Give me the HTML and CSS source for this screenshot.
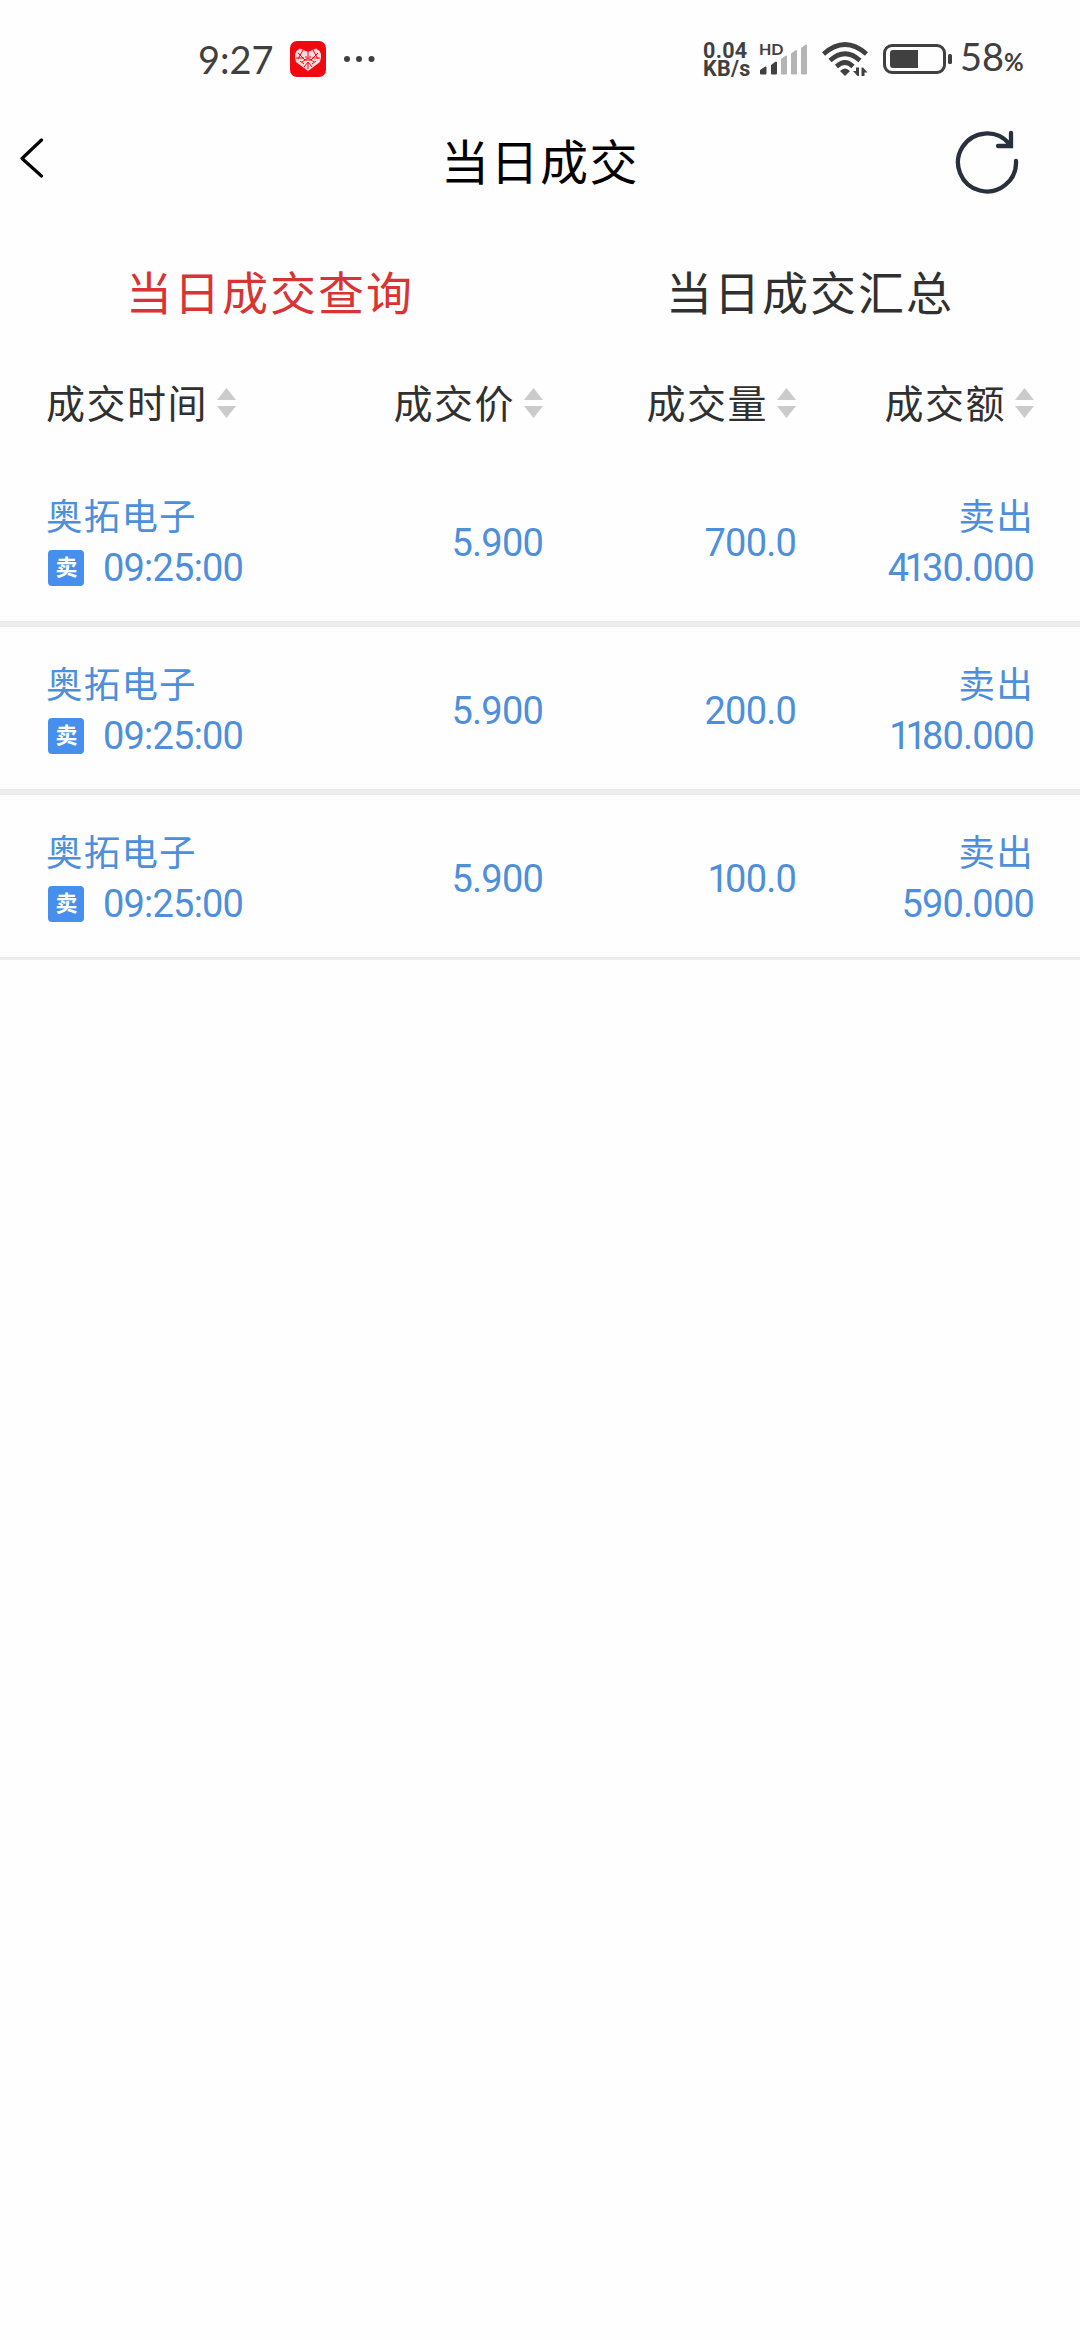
FILE: index.html
```html
<!DOCTYPE html>
<html lang="zh-CN">
<head>
<meta charset="utf-8">
<title>当日成交</title>
<link rel="stylesheet" href="styles.css">
</head>
<body>
<div class="status">
  <span class="clock">9:27</span>
  <svg class="app" viewBox="0 0 36 36"><rect width="36" height="36" rx="7" fill="#ee0a10"/><path d="M18 30 6 21Q2.500 11 10 7.500L18 11 26 7.500Q33.500 11 30 21Z" fill="#fbdcdc"/><path d="M8 12l7 7M13 9l-5 9M28 12l-7 7M23 9l5 9M6 17h8M22 17h8M12 21l6-4 6 4M14 26l4-5 4 5M18 11v4M15 16l6 0M15 19h6M18 22v6M10 20l4 3M26 20l-4 3" stroke="#ee0a10" stroke-width="1" fill="none"/></svg>
  <svg class="dots" viewBox="0 0 32 8"><circle cx="4" cy="4" r="3"/><circle cx="16" cy="4" r="3"/><circle cx="28.500" cy="4" r="3"/></svg>
  <div class="speed"><span>0.04</span><span>KB/s</span></div>
  <div class="signal"><span class="hd">HD</span>
    <svg viewBox="0 0 50 34"><path d="M2 31.500v-3l4.500-3v6z M13 31.500v-8l4-3v11z" fill="#404040" stroke="#404040" stroke-width="2" stroke-linejoin="round"/><path d="M23 31.500v-14l4-3v17z M33 31.500V12l4-3v22.500z M43 31.500V6.500l4-3v28z" fill="#b4b4b4" stroke="#b4b4b4" stroke-width="2" stroke-linejoin="round"/></svg>
  </div>
  <svg class="wifi" viewBox="0 0 46 34"><g fill="none" stroke="#404040" stroke-width="4.600"><path d="M1.500 12Q23-7 44.500 12"/><path d="M8 18.500Q23 5 38 18.500"/><path d="M14.500 24.500Q23 16.500 31 24.500"/></g><path d="M18 29q5-5 10 0l-5 5z"/><path d="M37 25.500V34h-1.500L31 29h3v-3.500zM39.500 34v-8.500H41l4.500 5h-3V34z"/></svg>
  <svg class="battery" viewBox="0 0 70 30"><rect x="1.500" y="1.500" width="60" height="27" rx="7.500" fill="none" stroke="#404040" stroke-width="3"/><path d="M10 6h25v18H10q-3 0-3-3V9q0-3 3-3z"/><rect x="65" y="10" width="4" height="10" rx="1.500"/></svg>
  <span class="level">58<small>%</small></span>
</div>
<header class="nav">
  <svg class="back" viewBox="0 0 24 40"><path d="M21.500 2 2 20.500 21.500 38" fill="none" stroke="#000" stroke-width="3.200" stroke-linecap="round" stroke-linejoin="round"/></svg>
  <h1>当日成交</h1>
  <svg class="refresh" viewBox="0 0 64 64"><g fill="none" stroke="#28303b" stroke-width="4.300" stroke-linecap="round"><path d="M61 31A29 29 0 1 1 54 13.500"/><path d="M56 3v13H43"/></g></svg>
</header>
<nav class="tabs"><span class="on">当日成交查询</span><span>当日成交汇总</span></nav>
<main>
  <div class="grid head">
    <span>成交时间<i></i></span><span>成交价<i></i></span><span>成交量<i></i></span><span>成交额<i></i></span>
  </div>
  <div class="grid row">
    <div><p class="cn">奥拓电子</p><p class="time"><b>卖</b>09:25:00</p></div><div class="num">5.900</div><div class="num">700.0</div>
    <div><p class="cn">卖出</p><p>4<u>1</u>30.000</p></div>
  </div>
  <div class="grid row">
    <div><p class="cn">奥拓电子</p><p class="time"><b>卖</b>09:25:00</p></div><div class="num">5.900</div><div class="num">200.0</div>
    <div><p class="cn">卖出</p><p><u class="pair">11</u>80.000</p></div>
  </div>
  <div class="grid row">
    <div><p class="cn">奥拓电子</p><p class="time"><b>卖</b>09:25:00</p></div><div class="num">5.900</div><div class="num"><u>1</u>00.0</div>
    <div><p class="cn">卖出</p><p>590.000</p></div>
  </div>
</main>
</body>
</html>
```
FILE: styles.css
```css
* { box-sizing: border-box; margin: 0; padding: 0; }
body { width: 1080px; min-height: 2340px; background: #fefefe; color: #303030; font-family: Roboto, "Noto Sans CJK SC", sans-serif; }
svg { display: block; flex: none; }

.status { display: flex; height: 118px; padding-left: 198px; align-items: center; color: #404040; fill: #404040; font-family: Lato, sans-serif; }
.clock { width: 92px; font-size: 38px; line-height: 40px; }
.app { width: 36px; height: 36px; }
.dots { width: 32px; height: 8px; margin-left: 17px; }
.speed { display: flex; flex-direction: column; width: 54px; margin-left: 328px; padding-top: 2px; font: bold 21.500px/18px Roboto, sans-serif; letter-spacing: .300px; white-space: nowrap; }
.signal { display: grid; width: 50px; height: 34px; margin-left: 2px; }
.signal > * { grid-area: 1 / 1; }
.signal svg { width: 50px; height: 34px; }
.hd { font: bold 16px/14px Lato, sans-serif; }
.wifi { width: 46px; height: 34px; margin-left: 13px; }
.battery { width: 70px; height: 30px; margin-left: 15px; }
.level { margin-left: 7px; font-size: 38px; line-height: 40px; white-space: nowrap; }
.level small { font-size: 24px; font-weight: bold; }

.nav { display: flex; height: 88px; padding: 0 61px 0 20px; align-items: center; justify-content: space-between; }
.back { width: 24px; height: 40px; margin-bottom: 8px; }
.nav h1 { padding-top: 3px; font-size: 48px; line-height: 85px; font-weight: 400; letter-spacing: 1.500px; color: #000; margin-left: 81px; }
.refresh { width: 64px; height: 64px; }

.tabs { display: grid; grid-template-columns: 1fr 1fr; height: 126px; text-align: center; font-size: 46px; letter-spacing: 2px; line-height: 176px; }
.on { color: #d83434; }

.grid { display: grid; grid-template-columns: 241px 256px 253px 238px; padding-left: 46px; text-align: right; }
.grid > :first-child { text-align: left; }
.head { height: 127px; font-size: 39px; letter-spacing: 1.500px; line-height: 146px; }
.head i { display: inline-block; width: 19px; height: 30px; margin-left: 9px; background: #cbcbcb; clip-path: polygon(50% 0, 100% 40%, 0 40%, 0 60%, 100% 60%, 50% 100%, 0 60%, 0 40%); }
.row { height: 168px; padding-top: 33px; border-bottom: 6px solid #ededed; color: #4d8fdb; font-size: 38px; line-height: 52px; letter-spacing: -.800px; }
.row:last-child { height: 165px; border-bottom-width: 3px; }
.row .cn { height: 50px; font-size: 36.500px; letter-spacing: 1.200px; }
.num { padding-top: 25px; }
.time { display: flex; align-items: center; }
.time b { width: 36px; height: 36px; margin: 0 19px 0 2px; border-radius: 4px; background: #468fed; color: #fff; font-size: 22px; line-height: 35px; text-align: center; }
.row u { text-decoration: none; margin: 0 -3px 0 -4px; }
.row .pair { letter-spacing: -5px; margin-right: 0; }
```
